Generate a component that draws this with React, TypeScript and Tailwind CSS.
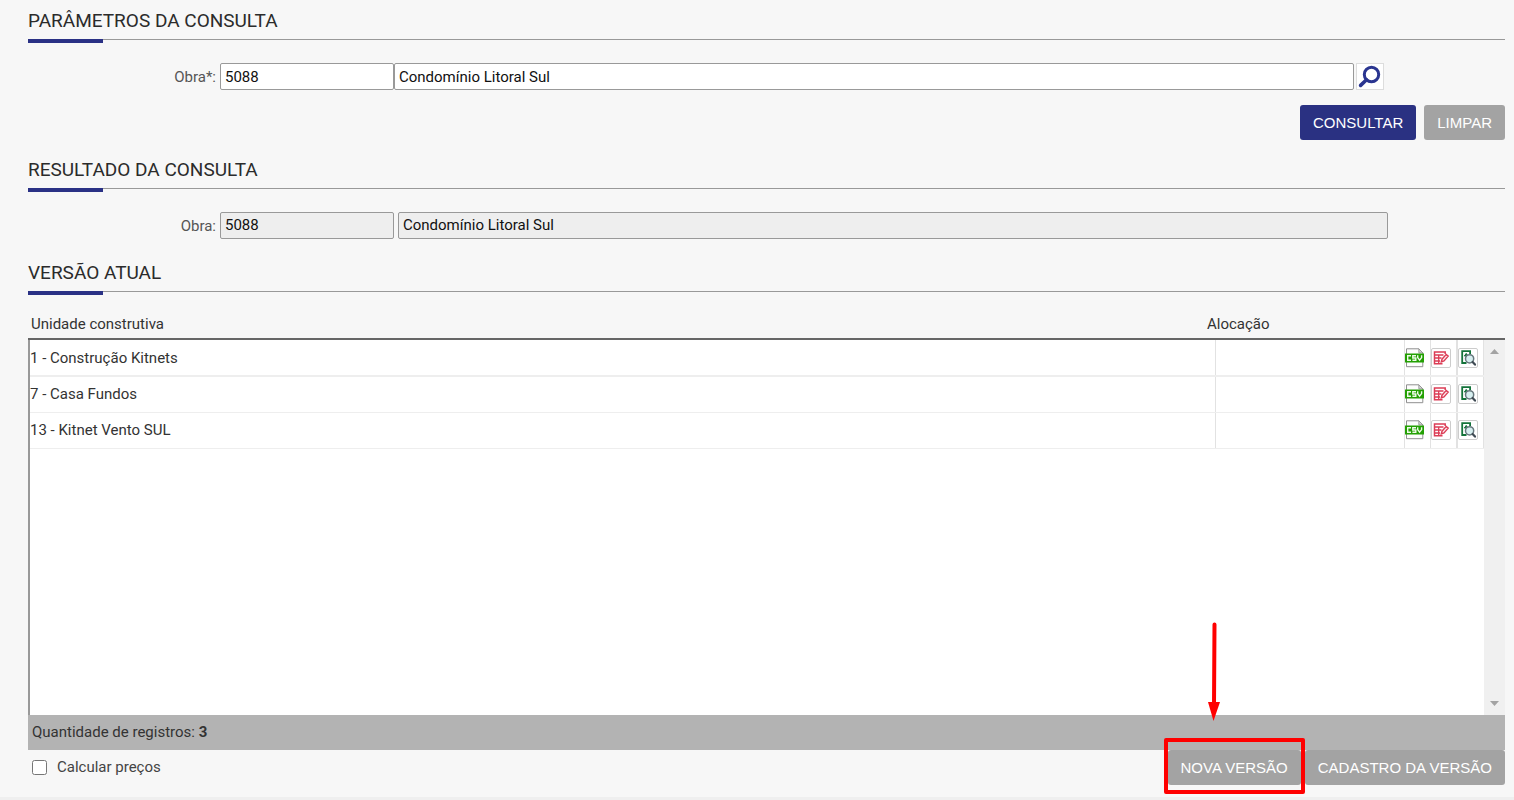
import { useState } from "react";
import type { ReactNode } from "react";

const units = ["1 - Construção Kitnets", "7 - Casa Fundos", "13 - Kitnet Vento SUL"];

function SectionTitle({ children }: { children: ReactNode }) {
  return (
    <div className="flex flex-col">
      <h2 className="pb-1.5 text-[19px] leading-6 font-normal text-[#2b2b2b]">{children}</h2>
      <div className="h-1 border-t border-[#999999]">
        <div className="-mt-px h-1 w-[75px] bg-[#2a3185]" />
      </div>
    </div>
  );
}

function ActionButton({ children, primary = false }: { children: ReactNode; primary?: boolean }) {
  return (
    <button
      type="button"
      className={`h-[35px] rounded-[3px] px-[13px] font-['Liberation_Sans',Arial,sans-serif] text-[15px] whitespace-nowrap text-white ${
        primary ? "bg-[#2a3182]" : "bg-[#a3a3a3]"
      }`}
    >
      {children}
    </button>
  );
}

function SearchIcon() {
  return (
    <svg viewBox="0 0 26 25" className="h-[25px] w-[26px]" fill="none" stroke="#2a3590" aria-hidden="true">
      <circle cx="14.5" cy="10.5" r="7.2" strokeWidth="3" />
      <path d="M9.5 15.8 L3.6 21.4" strokeWidth="3.6" strokeLinecap="round" />
    </svg>
  );
}

function CsvIcon() {
  return (
    <svg viewBox="0 0 19 20" className="h-5 w-[19px]" fill="none" aria-hidden="true">
      <path d="M1.5 .8 H13.8 L17.8 4.8 V18.7 H1.5 Z" fill="#fdfdfd" stroke="#8f8f8f" />
      <path d="M13.8 .8 V4.8 H17.8 Z" fill="#d5d5d5" stroke="#8f8f8f" strokeWidth=".8" />
      <rect y="5.5" width="19" height="9" fill="#23a003" />
      <path
        d="M6 7.8 H2.7 V12.2 H6 M11 7.8 H7.8 V10 H10.8 V12.2 H7.4 M12.7 7.3 V9.6 L14.6 12.2 L16.6 9.6 V7.3"
        stroke="#effbe9"
        strokeWidth="1.4"
      />
    </svg>
  );
}

function EditIcon() {
  return (
    <svg viewBox="0 0 20 20" className="size-5" fill="none" stroke="#dc3d56" aria-hidden="true">
      <rect x=".5" y=".5" width="19" height="19" rx="1.5" fill="#fff" stroke="#cccccc" />
      <path d="M11.5 15.8 H3.5 V4 H14.2 V6" strokeWidth="1.5" />
      <path d="M3.5 7 H12.5 M3.5 10 H10.5 M3.5 13 H9 M7.7 7 V15.8" strokeWidth="1.3" />
      <path d="M10.3 13.8 L11 11.2 L15.2 6.4 L17.2 8.1 L13 12.9 Z" fill="#fbe9eb" strokeWidth="1.4" />
    </svg>
  );
}

function PreviewIcon() {
  return (
    <svg viewBox="0 0 20 20" className="size-5" fill="none" aria-hidden="true">
      <rect x=".5" y=".5" width="19" height="19" rx="1.5" fill="#fff" stroke="#cccccc" />
      <path d="M8.5 15 H4.2 V3.1 H12.1 V6" stroke="#13733a" strokeWidth="1.8" />
      <path d="M6.4 8 L8.2 5.4 L10 8 Z" fill="#13733a" stroke="#13733a" />
      <circle cx="11.6" cy="10.8" r="4.1" fill="#d7eff0" stroke="#66777d" strokeWidth="1.5" />
      <path d="M14.6 14 L17 16.6" stroke="#3f4b54" strokeWidth="2.2" strokeLinecap="round" />
    </svg>
  );
}

const fieldClass =
  "h-[27px] min-w-0 rounded-[2px] border border-[#999999] px-1 text-[15px] leading-5 text-[#111111] outline-none";

export default function App() {
  const [code, setCode] = useState("5088");
  const [name, setName] = useState("Condomínio Litoral Sul");

  return (
    <main className="flex min-h-screen flex-col border-b-[3px] border-[#efefef] bg-[#f7f7f7] pt-[9px] pr-[9px] pb-3 pl-7 font-[Roboto,sans-serif] text-[15px] leading-5 text-[#333333]">
      <form className="flex flex-col" onSubmit={(e) => e.preventDefault()}>
        <SectionTitle>PARÂMETROS DA CONSULTA</SectionTitle>
        <div className="mt-5 flex items-center pr-[121px]">
          <label htmlFor="obra" className="w-48 pr-1 text-right text-[#555555]">
            Obra*:
          </label>
          <input id="obra" className={`${fieldClass} w-[174px] bg-white`} value={code} onChange={(e) => setCode(e.target.value)} />
          <input
            aria-label="Nome da obra"
            className={`${fieldClass} flex-1 bg-white`}
            value={name}
            onChange={(e) => setName(e.target.value)}
          />
          <button
            type="button"
            aria-label="Pesquisar obra"
            className="ml-0.5 h-[27px] w-7 border border-[#dddddd] bg-white"
          >
            <SearchIcon />
          </button>
        </div>
        <div className="mt-[15px] flex justify-end gap-2">
          <ActionButton primary>CONSULTAR</ActionButton>
          <ActionButton>LIMPAR</ActionButton>
        </div>
      </form>

      <section className="mt-[18px] flex flex-col">
        <SectionTitle>RESULTADO DA CONSULTA</SectionTitle>
        <div className="mt-5 flex items-center pr-[117px]">
          <label htmlFor="obra-resultado" className="w-48 pr-1 text-right text-[#555555]">
            Obra:
          </label>
          <input id="obra-resultado" readOnly className={`${fieldClass} mr-1 w-[174px] bg-[#eeeeee] pb-0.5`} value="5088" />
          <input
            aria-label="Nome da obra consultada"
            readOnly
            className={`${fieldClass} flex-1 bg-[#eeeeee] pb-0.5`}
            value="Condomínio Litoral Sul"
          />
        </div>
      </section>

      <section className="mt-[22px] flex flex-1 flex-col">
        <SectionTitle>VERSÃO ATUAL</SectionTitle>
        <div className="relative mt-4 flex flex-1 flex-col">
          <table className="flex flex-1 flex-col">
            <thead className="block border-b-2 border-[#666666]">
              <tr className="flex h-[27px] items-center pb-0.5">
                <th scope="col" className="flex-1 pl-[3px] text-left font-normal">
                  Unidade construtiva
                </th>
                <th scope="col" className="w-[298px] text-left font-normal">
                  Alocação
                </th>
              </tr>
            </thead>
            <tbody className="group block flex-1 border-l-2 border-[#999999] bg-white pr-[21px]">
              {units.map((unit) => (
                <tr
                  key={unit}
                  className="flex h-9 border-b border-[#eeeeee] *:pb-px first:h-[37px] first:border-b-2 first:*:pb-0"
                >
                  <td className="flex flex-1 items-center border-r border-[#e2e2e2]">{unit}</td>
                  <td className="w-[189px] border-r border-[#e2e2e2]" />
                  <td className="flex w-[26px] items-center border-r border-[#e2e2e2]">
                    <button type="button" aria-label={`Exportar CSV: ${unit}`}>
                      <CsvIcon />
                    </button>
                  </td>
                  <td className="flex w-[27px] items-center border-r-2 border-[#e2e2e2]">
                    <button type="button" aria-label={`Editar: ${unit}`}>
                      <EditIcon />
                    </button>
                  </td>
                  <td className="flex w-[26px] items-center border-r border-[#e2e2e2]">
                    <button type="button" aria-label={`Visualizar: ${unit}`}>
                      <PreviewIcon />
                    </button>
                  </td>
                </tr>
              ))}
            </tbody>
          </table>
          <div className="absolute top-[29px] right-0 bottom-0 flex w-[21px] flex-col items-center justify-between bg-[#f0f0f0] py-[9px]">
            <svg viewBox="0 0 9 5" className="h-[5px] w-[9px]" fill="#a3a3a3" aria-hidden="true">
              <path d="M0 5 L4.5 0 L9 5 Z" />
            </svg>
            <svg viewBox="0 0 9 5" className="h-[5px] w-[9px]" fill="#a3a3a3" aria-hidden="true">
              <path d="M0 0 L4.5 5 L9 0 Z" />
            </svg>
          </div>
        </div>
        <p className="flex h-[35px] items-center bg-[#b3b3b3] pb-px pl-1">
          <span>
            Quantidade de registros: <b className="font-bold">3</b>
          </span>
        </p>
      </section>

      <footer className="flex h-[35px] items-center justify-between">
        <label className="flex items-center gap-[10px] pb-px pl-1 text-[#444444]">
          <input type="checkbox" className="size-[15px] rounded-[3px]" />
          Calcular preços
        </label>
        <div className="flex gap-1">
          <div className="relative">
            <ActionButton>NOVA VERSÃO</ActionButton>
            <div className="pointer-events-none absolute -inset-x-1 -top-3 -bottom-[9px] rounded-[2px] border-4 border-[#ff0000]" />
            <svg
              viewBox="0 0 14 100"
              className="pointer-events-none absolute bottom-[64px] left-[39px] h-[100px] w-[14px]"
              aria-hidden="true"
            >
              <path d="M7.5 3.5 L7 84" stroke="#ff0000" strokeWidth="4" strokeLinecap="round" />
              <path d="M1 81 H13 L6.5 100 Z" fill="#ff0000" />
            </svg>
          </div>
          <ActionButton>CADASTRO DA VERSÃO</ActionButton>
        </div>
      </footer>
    </main>
  );
}
